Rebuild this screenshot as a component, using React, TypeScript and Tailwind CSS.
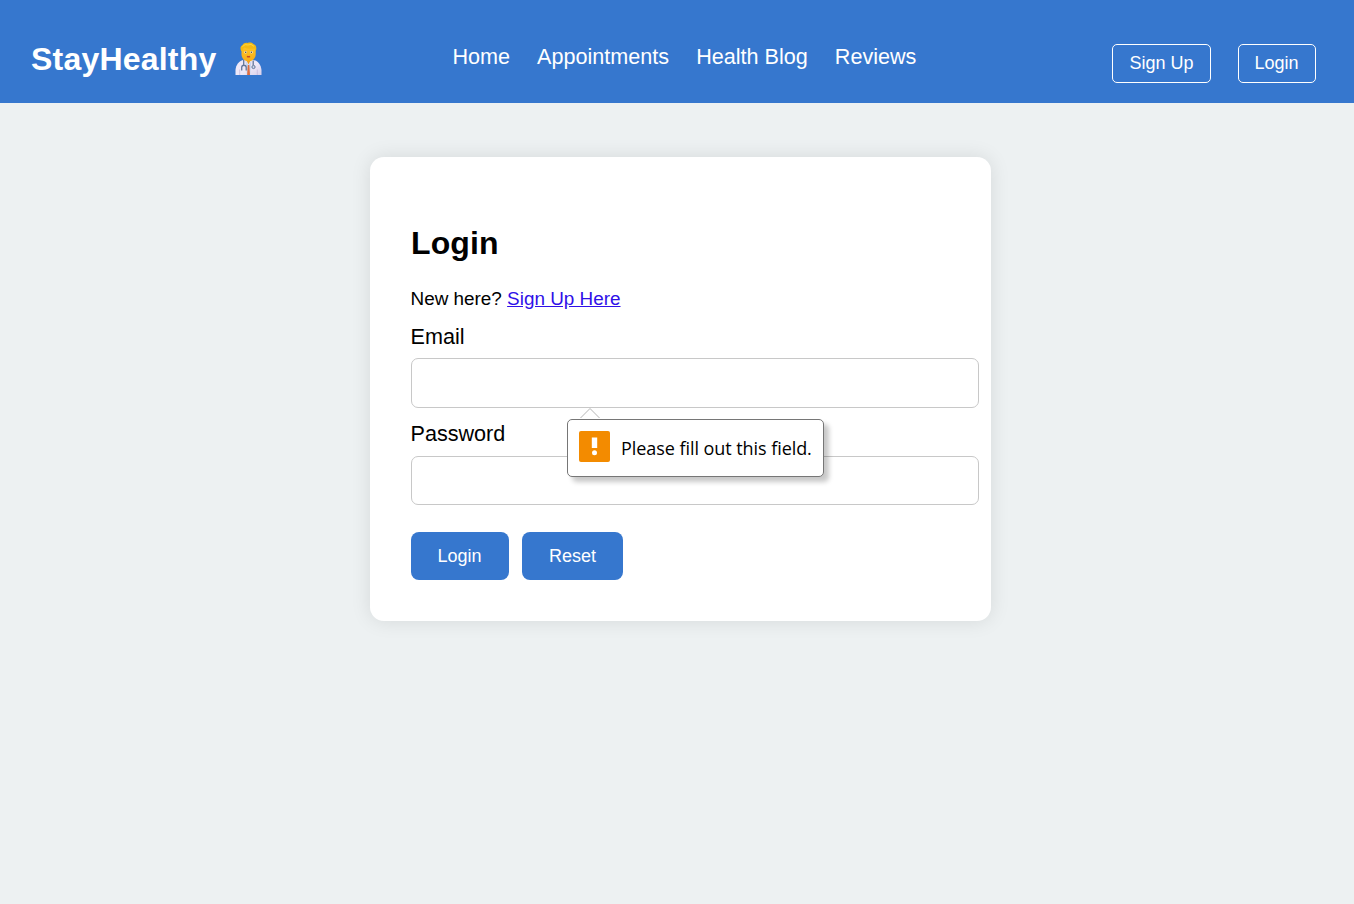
import React from "react";

function DoctorIcon() {
  return (
    <svg width="27" height="34" viewBox="0 0 27 34" aria-hidden="true">
      <defs>
        <linearGradient id="coat" x1="0" y1="0" x2="1" y2="1">
          <stop offset="0" stopColor="#efe8f8" />
          <stop offset="0.55" stopColor="#eee8f8" />
          <stop offset="1" stopColor="#d9d0ea" />
        </linearGradient>
        <linearGradient id="skin" x1="0" y1="0" x2="0" y2="1">
          <stop offset="0" stopColor="#ffc928" />
          <stop offset="1" stopColor="#f7ad18" />
        </linearGradient>
      </defs>
      <path d="M0.500 33V28C1 22.500 4 18.700 9 17.700h8.500c5 1 8.200 4.300 9 10.300v5z" fill="url(#coat)" />
      <path d="M10.500 16.500l3 6 3-6z" fill="#ed9a22" />
      <path d="M10.500 18.500l3 4.500 3-4.500-1.300 14.500h-3.400z" fill="#c8d5ef" />
      <path d="M12.800 23h1.500l.7 10h-2.900z" fill="#df6d3f" />
      <path d="M6.500 6C7 2.500 9 1.500 13.500 1.500S20.500 3.500 20.700 7.500V12c0 4-2.800 7.300-7.200 7.300S6.500 16 6.500 12z" fill="url(#skin)" />
      <path d="M6.300 9C5 7 5.200 4 7.500 3.300 8.500 1 11 .5 12.500 1c2.500-1 5-.4 6 1.200 2.700.6 3.500 4.200 2.300 6.800L19.500 6.500C16 7 12 6.800 9 5.500L7.200 9z" fill="#f4b915" />
      <path d="M7.500 4.500Q10 1.500 13 3q3-1.800 6 1.300" stroke="#ffd63c" strokeWidth="1" fill="none" />
      <circle cx="10.600" cy="10.200" r="1.300" fill="#fff2bd" />
      <circle cx="16.500" cy="10.200" r="1.300" fill="#fff2bd" />
      <circle cx="10.700" cy="10.300" r=".8" fill="#4f4540" />
      <circle cx="16.400" cy="10.300" r=".8" fill="#4f4540" />
      <path d="M12 14.300q1.500 1 3 0" stroke="#c44724" strokeWidth="1.400" fill="none" />
      <path d="M8.700 18v5.300M6.700 28.500v-3c0-3 4.500-3 4.500 0v3M18.200 18.500v4.800" stroke="#63779a" strokeWidth="1.300" fill="none" />
      <circle cx="18.500" cy="25" r="1.600" fill="#ccd7e7" stroke="#63779a" strokeWidth="1" />
      <path d="M4.700 27.500V33M22.300 27.500V33" stroke="#c1b4da" strokeWidth=".7" />
    </svg>
  );
}

function ValidationTip() {
  return (
    <div className="absolute left-[156px] top-[61px] z-10 flex h-[58px] w-[257px] rounded-[5px] border border-[#767676] bg-white pl-[11px] pt-[11px] shadow-[5px_5px_5px_rgba(0,0,0,0.22)]">
      <svg className="absolute left-[12px] top-[-13px]" width="20" height="12" viewBox="0 0 20 12">
        <path d="M.5 11L10 1.500l9.500 9.500" fill="white" stroke="#b5b5b5" />
      </svg>
      <svg width="31" height="31" viewBox="0 0 31 31" className="shrink-0">
        <rect width="31" height="31" rx="2" fill="#f38b00" />
        <path d="M12.800 6.500h5.400v10.500h-5.400z" fill="white" />
        <circle cx="15.500" cy="21.700" r="2.500" fill="white" />
      </svg>
      <span className="ml-[11px] mt-[5px] whitespace-nowrap font-['Open_Sans','Noto_Sans',sans-serif] text-[18px] leading-[24px] tracking-[-0.06px]">
        Please fill out this field.
      </span>
    </div>
  );
}

const links = ["Home", "Appointments", "Health Blog", "Reviews"];

export default function App() {
  return (
    <div className="min-h-screen bg-[#edf1f2] font-['Liberation_Sans',Arial,sans-serif] text-black">
      <header className="flex h-[103px] items-start bg-[#3677ce] text-white">
        <div className="flex w-[452.5px] items-start pl-[31px] pt-[40px]">
          <span className="w-[204px] text-[32px] font-bold leading-[38px] tracking-[0.2px]">StayHealthy</span>
          <span className="mt-[2px]"><DoctorIcon /></span>
        </div>
        <nav className="flex gap-[27px] pt-[44px] text-[21.6px] leading-[25px]">
          {links.map((label) => <a key={label} href="#">{label}</a>)}
        </nav>
        <div className="ml-auto mr-[38px] mt-[44px] flex gap-[27px] text-[18px]">
          <button className="h-[39px] w-[99px] rounded-[5px] border border-white">Sign Up</button>
          <button className="h-[39px] w-[78px] rounded-[5px] border border-white pr-[1px]">Login</button>
        </div>
      </header>
      <main className="ml-[370px] mt-[54px] h-[464px] w-[621px] rounded-[14px] bg-white pl-[41px] pt-[67px] shadow-[0_0_20px_rgba(0,0,0,0.1)]">
        <h1 className="text-[32px] font-bold leading-[38px] tracking-[0.1px]">Login</h1>
        <p className="-ml-[0.5px] mt-[26px] text-[18.9px] leading-[22px]">
          New here? <a href="#" className="text-[#2f10e8] underline">Sign Up Here</a>
        </p>
        <form className="mt-[14px]">
          <label htmlFor="email" className="-ml-[0.5px] block text-[21.6px] leading-[25px]">Email</label>
          <div className="relative mt-[9px] h-[50px] w-[568px]">
            <input id="email" className="block h-full w-full rounded-[7px] border border-[#c8c8c8] px-3" />
            <ValidationTip />
          </div>
          <label htmlFor="password" className="-ml-[0.5px] mt-[13px] block text-[21.6px] leading-[25px]">Password</label>
          <input id="password" type="password" className="mt-[10px] block h-[49px] w-[568px] rounded-[7px] border border-[#c8c8c8] px-3" />
          <div className="mt-[27px] flex gap-[13px] text-[18px] text-white">
            <button type="button" className="h-[48px] w-[98px] rounded-[8px] bg-[#3677ce] pr-[1px]">Login</button>
            <button type="reset" className="h-[48px] w-[101px] rounded-[8px] bg-[#3677ce]">Reset</button>
          </div>
        </form>
      </main>
    </div>
  );
}
